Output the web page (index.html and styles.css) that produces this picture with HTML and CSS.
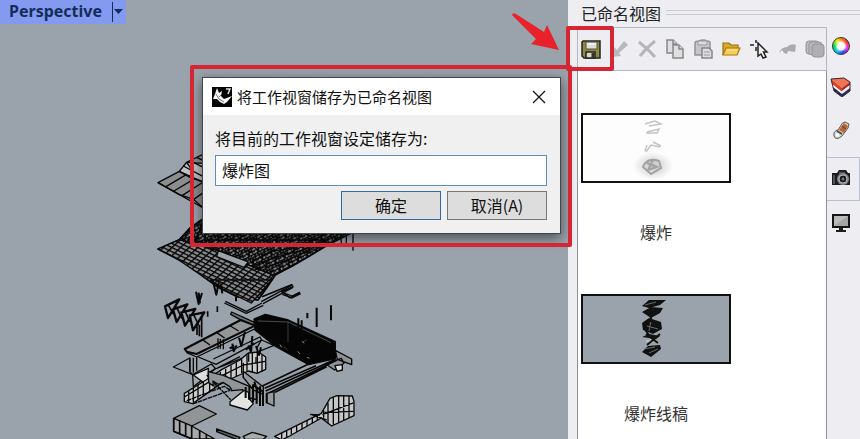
FILE: index.html
```html
<!DOCTYPE html>
<html lang="zh-CN">
<head>
<meta charset="utf-8">
<title>已命名视图</title>
<link rel="stylesheet" href="styles.css">
</head>
<body>
<div class="app">
  <main class="viewport">
    <svg class="model" width="568" height="439" viewBox="0 0 568 439" aria-hidden="true">
      <defs>
        <pattern id="mesh" width="17" height="11" patternUnits="userSpaceOnUse" patternTransform="matrix(1 .48 -.8 .75 0 0)">
          <rect width="17" height="11" fill="#85878a"/><path d="M0 0H17M0 0V11" stroke="#050505" stroke-width="8"/>
        </pattern>
        <pattern id="scribble" width="31" height="27" patternUnits="userSpaceOnUse" patternTransform="rotate(-27)">
          <path d="M0 2H31M0 10H31M0 19H31M4 0L9 27M16 0L12 27M27 0L22 27M0 0L14 13L31 4M6 25L19 15L31 23" stroke="#080808" stroke-width="4" fill="none"/>
        </pattern>
      </defs>
      <g transform="translate(140 140) scale(.33333)" stroke="#080808" stroke-width="4" stroke-linejoin="round">
        <path d="M54 128L118 94L140 67L190 42V204L160 178L117 163Z" fill="#8b8d8f"/>
        <path d="M118 94L150 112L190 126V70L140 67Z" fill="#bfc1c3"/>
        <path d="M54 128L117 163L190 204M78 140L140 103M102 153L164 116M126 167L190 126M118 94L190 126M130 78L190 110M150 62L190 82M170 52L190 62M140 67L160 96M161 178L190 158" fill="none"/>
        <path d="M54 327L118 299L150 264L190 235L640 276L612 290L558 318L510 347L455 379L406 405L380 444L354 480L292 470L235 442L190 410L160 382L112 357Z" fill="#8a8c90" stroke-width="5"/>
        <path d="M54 327L118 299L230 330L325 375L400 405L354 480L292 470L235 442L190 410L112 357Z" fill="url(#mesh)"/>
        <path d="M118 299L150 264L190 240L625 276L558 318L455 379L400 405L325 375L230 330Z" fill="url(#scribble)"/>
        <path d="M235 332L325 366L312 382L230 350Z" fill="#9da3ac"/>
        <path d="M150 265L130 302M185 250L166 312M145 293L240 327M190 300L560 300M210 316L525 320M330 368L390 335L470 322L550 285M335 379L410 351L490 330L568 296M340 391L430 365L520 327M601 280L605 315M619 280V311M639 276V332" fill="none"/>
        <path d="M366 470L455 434L459 440L425 455L450 473L480 458" fill="none" stroke-width="5"/>
      </g>
      <g transform="translate(140 280) scale(.33333)" stroke="#080808" stroke-width="4" fill="none" stroke-linejoin="round">
        <path d="M210 0L250 28L334 69L360 40L395 0Z" fill="url(#mesh)"/>
        <path d="M218 0L229 44L237 4M242 10L247 40M288 50V64M168 35L176 72L186 39M176 38L180 70" stroke-width="6"/>
        <path d="M75 79L84 114L118 58ZM99 88L110 126L142 73ZM124 97L135 137L166 87ZM149 106L159 151L193 97Z" stroke-width="7"/>
        <path d="M84 73L100 102M109 80L126 116M134 91L150 126M160 102L176 135M171 132V165M178 135V169M185 108V172M203 94V110M232 79V96" stroke-width="5"/>
        <path d="M256 64L319 94L366 69M253 69L319 100L370 76M364 65L455 16M369 71L459 22M427 37L456 48L480 36M427 43L456 54L482 41" />
        <path d="M275 96L345 128L338 139L272 103Z" fill="#6f7274"/>
        <path d="M134 207L302 120L345 137L170 222L140 215Z" fill="#94979a" stroke-width="6"/>
        <path d="M186 178L210 195M229 157L254 174M271 138L296 153M140 218L170 231L348 145M150 233V274M160 233V278M170 231V272M234 175V207M241 177V206M250 178V208"/>
        <path d="M100 261L149 234V274L158 284Z"/>
        <path d="M158 284L214 252L226 265L205 285L160 320Z" fill="#a2a5a8"/>
        <path d="M160 285L205 265V318Z" fill="#ddd"/>
        <path d="M175 231L228 253L365 180L360 171L220 237M230 265L410 193M208 276L300 230M365 180L410 200"/>
        <path d="M342 117L376 103L445 120L586 185V236L506 254L408 200L345 150Z" fill="#050505"/>
        <path d="M353 123L445 126L573 188" stroke="#6b6e72" stroke-width="2"/>
        <path d="M444 127V187M431 201L440 206M486 187L500 180" stroke="#555" stroke-width="2"/>
        <path d="M530 83V141M573 76V121M502 99V115M475 115V149M485 121V165" stroke-width="6"/>
        <path d="M586 211L635 237V254L592 238ZM557 252L604 235L612 250L584 270Z" fill="#8e9295"/>
        <path d="M585 257L607 254V270L591 274Z" fill="#ddd"/>
        <path d="M367 318L506 252M374 325L528 257M377 333L586 238M382 341L590 241M405 337L560 260" stroke-width="5"/>
        <path d="M133 365V340L203 297L246 268L300 240L325 219L356 216L377 231V268L351 280L325 273L285 291L238 314L158 371Z" fill="#c9cbcd"/>
        <path d="M146 333V367M160 324V367M174 315V357M190 305V347M209 294V336M225 284V325M241 275V315M257 266V306M273 256V297M289 247V289M305 238V279M321 223V274M337 219V277M352 217V280M366 224V276M133 351L204 308L310 255L376 244"/>
        <path d="M140 362L253 319L275 333M158 372L270 331M200 285L272 359" stroke-dasharray="14 2"/>
        <path d="M205 275L250 286L328 319L350 332V359L318 351L308 329L276 332L269 320L249 307L235 313L219 303L220 318L206 308Z" fill="#929598"/>
        <path d="M310 274L370 321V343L340 330L310 292Z" fill="#97999b"/>
        <path d="M270 365L313 331L326 337V354L340 371L322 390L270 375Z" fill="#e3e3e1"/>
        <path d="M380 340L402 335V378L380 368Z" fill="#97999b"/>
        <path d="M317 321V354M328 318V360M339 316V367M350 330V371M360 319V378M369 332V378M380 340V370M337 314L371 336M343 305L354 340" stroke-width="6"/>
        <path d="M277 191L281 214L290 196M297 173L304 198L315 155M325 196L333 216L337 168M348 198L357 225L363 202M269 205L283 198M317 209L343 190" stroke-width="6"/>
        <path d="M310 248V295M326 220V245M348 231V250M364 180L350 205" />
        <path d="M420 194L425 202M487 184L492 190M473 214L480 222M501 232L508 235" stroke="#888" stroke-width="3"/>
        <path d="M101 415L178 377L229 402L155 438Z" fill="#929598"/>
        <path d="M101 415L155 438L224 477H155L101 454Z" fill="#a6a8aa"/>
        <path d="M101 415V454L157 477M119 423V462M137 431V470M155 438V477M179 451V477M199 463V477" stroke-width="5"/>
        <path d="M230 447L300 472L293 480L230 455Z" fill="#606366"/>
        <path d="M310 469L337 457L380 469L370 478H315Z" fill="#a9acae"/>
        <path d="M404 469L544 400L570 355L591 347L637 348L642 365V407L575 438L544 414L449 468L425 480Z" fill="#c5c7c9"/>
        <path d="M425 459V477M440 453V471M454 444V463M470 437V455M486 429V447M501 421V439M517 413V430M532 406V421M551 391V413M564 369V430M580 352V434M596 347V428M611 347V421M627 348V414M547 404L640 369M514 404L560 420M554 397L640 394M510 403L540 405"/>
      </g>
    </svg>
    <button class="view-title" type="button"><span>Perspective</span><svg width="12" height="22" viewBox="0 0 12 22" aria-hidden="true"><path d="M.5 2V22" stroke="#142d58"/><path d="M2 9H11L6.500 14Z" fill="#142d58"/></svg></button>
  </main>

  <aside class="panel">
    <h2 class="panel-title"><span>已命名视图</span></h2>
    <div class="toolbar">
      <button type="button" aria-label="储存"><svg viewBox="0 0 22 22"><path d="M3 3H20V20H4L2 18V4Z" fill="#8d8b43" stroke="#24231d" stroke-width="1.500"/><path d="M6 4H17V11H6Z" fill="#ddd" stroke="#56543a"/><path d="M6 14H15V20H6Z" fill="#d9d6c4" stroke="#252520" stroke-width="1.500"/><path d="M13 15V20" stroke="#35342e" stroke-width="3"/><path d="M7 6H16" stroke="#fff"/></svg></button>
      <button type="button" aria-label="还原"><svg viewBox="0 0 22 22"><path d="M16 3L20 7L11 15L13 18L3 19L6 9L9 12Z" fill="#b8b9ba"/></svg></button>
      <button type="button" aria-label="删除"><svg viewBox="0 0 22 22"><path d="M3 4Q11 10 19 19M19 3Q10 10 4 18" fill="none" stroke="#b5b6b8" stroke-width="3"/></svg></button>
      <button type="button" aria-label="复制"><svg viewBox="0 0 22 22"><g fill="#dedfe0" stroke="#888" stroke-width="1.500"><path d="M3 2H9L13 6V15H3Z"/><path d="M9 2V6H13"/><path d="M9 7H15L19 11V20H9Z"/><path d="M15 7V11H19"/></g></svg></button>
      <button type="button" aria-label="粘贴"><svg viewBox="0 0 22 22"><path d="M3 5Q3 3 7 3Q11 1 15 3Q19 3 18 6V17H3Z" fill="#c6c7c8" stroke="#929395" stroke-width="1.500"/><path d="M6 3V7H15V3Z" fill="#ddd" stroke="#999"/><path d="M10 10H17L20 13V20H10Z" fill="#dedfe0" stroke="#858689" stroke-width="1.500"/><path d="M12 14H18M12 17H18" stroke="#999"/></svg></button>
      <button type="button" aria-label="打开"><svg viewBox="0 0 22 22"><path d="M3 17V5H9L11 7H18V10" fill="#d8a925" stroke="#987116" stroke-width="1.200"/><path d="M3 17L6 10H20L17 17Z" fill="#f7cf58" stroke="#a37817" stroke-width="1.200"/><path d="M7 12H17" stroke="#ffe99b"/></svg></button>
      <button type="button" aria-label="选取"><svg viewBox="0 0 22 22"><path d="M2 7H6M10 7H12M8 2V5M8 9V13" stroke="#222" stroke-width="1.500"/><path d="M10 5L19 14L15.500 14L18 19L15 20L13 16L10 18Z" fill="#eee" stroke="#222" stroke-width="1.500"/></svg></button>
      <button type="button" aria-label="编辑"><svg viewBox="0 0 22 22"><path d="M3 15Q5 9 11 9Q15 5 20 7L19 14L12 13L11 16L8 15L6 12Z" fill="#a9abad"/></svg></button>
      <button type="button" aria-label="图层"><svg viewBox="0 0 22 22"><g stroke="#929497" fill="#b9bbbd"><rect x="2" y="3" width="13" height="13" rx="3"/><rect x="5" y="4" width="13" height="13" rx="3"/><rect x="8" y="6" width="12" height="13" rx="3" fill="#aeb0b2"/></g></svg></button>
    </div>
    <div class="views">
      <figure>
        <svg viewBox="2 2 146 66" aria-hidden="true"><defs><radialGradient id="haze"><stop stop-color="#bbb"/><stop offset=".4" stop-color="#ddd"/><stop offset="1" stop-color="#fdfdfd"/></radialGradient></defs><rect width="150" height="70" fill="#fdfdfd"/><ellipse cx="72" cy="53" rx="20" ry="14" fill="url(#haze)"/><g fill="none"><path d="M64 11L74 8L80 11L68 13M66 19L78 16L76 20H65M65 39L70 32L79 34M66 32L64 38M72 29L80 33" stroke="#c4c4c4" stroke-width="1.500"/><path d="M62 54Q66 44 78 48L80 55L70 61ZM66 50L76 54L67 57L72 47" stroke="#a2a2a2" stroke-width="2"/></g></svg>
        <figcaption>爆炸</figcaption>
      </figure>
      <figure>
        <svg viewBox="2 2 146 66" aria-hidden="true"><rect width="150" height="70" fill="#9aa2ac"/><path d="M61 12L68 6L85 6L79 11L68 14ZM61 18L70 13L82 14L79 19L70 24ZM61 29L68 24L80 28L81 35L72 40L62 36ZM61 43L68 40L79 42L75 45ZM61 58L67 52L79 51L80 55L70 63Z" fill="#111"/><path d="M64 11L75 8M66 32L77 35M70 27L68 37M63 55L74 53M68 59L77 55" stroke="#666b70"/><path d="M65 47H72L69 45" stroke="#ddd" fill="none"/><path d="M65 40L77 49M79 40L66 51M70 20V28M63 34L70 44" stroke="#111" stroke-width="2"/></svg>
        <figcaption>爆炸线稿</figcaption>
      </figure>
    </div>
    <nav class="tabs" aria-label="面板">
      <button type="button" aria-label="材质"><i class="wheel"></i></button>
      <button type="button" aria-label="图层"><svg viewBox="0 0 22 22"><path d="M1 4L14 3L20 7L12 13Z" fill="#ee7653"/><path d="M1 4L12 13V17L2 9Z" fill="#d94024"/><path d="M2 9L12 17V19L3 12Z" fill="#fff"/><path d="M3 12L12 19V22L4 16Z" fill="#202c63"/><path d="M12 13L20 7V10L12 16Z" fill="#b4251d"/><path d="M12 16L20 10V13L12 19Z" fill="#eee"/><path d="M12 19L20 13V16L12 22Z" fill="#202c63"/><path d="M1 4L14 3L20 7V16L12 22L4 16Z" fill="none" stroke="#41202a"/></svg></button>
      <button type="button" aria-label="渲染"><svg viewBox="0 0 22 22"><path d="M15 3L19 5L18 9L12 17Q6 22 4 17Q3 12 8 11L10 8Q12 3 15 3Z" fill="#dad9d3" stroke="#555"/><path d="M14 4L18 7L14 14L9 11Z" fill="#bd632f"/><path d="M12 7L16 10" stroke="#632f18"/><path d="M7 12L12 15" stroke="#444" stroke-width="2"/><path d="M6 16H9" stroke="#fff" stroke-width="3"/></svg></button>
      <button class="selected" type="button" aria-label="已命名视图"><svg viewBox="0 0 22 22"><path d="M2 6H7L9 3H16L18 6H20V18H2Z" fill="#1c1d20"/><circle cx="13" cy="12" r="6" fill="#85888b"/><circle cx="13" cy="12" r="4" fill="#18191b" stroke="#bbb"/><circle cx="13" cy="12" r="1.500" fill="#777"/><path d="M9 6H15M4 8V17" stroke="#888"/></svg></button>
      <button type="button" aria-label="显示"><svg viewBox="0 0 22 22"><path d="M2 3H20V17H2Z" fill="#161616"/><path d="M4 5H18V15H4Z" fill="#b9bab9"/><path d="M4 15L18 5V15Z" fill="#a4a5a4"/><path d="M9 17H13V19H16V21H6V19H9Z" fill="#1d1d1d"/></svg></button>
    </nav>
  </aside>

  <form class="dialog" role="dialog" aria-labelledby="dialog-title">
    <header>
      <svg class="rhino" width="20" height="20" viewBox="0 0 20 20" aria-hidden="true"><path d="M0 0H20V20H0Z" fill="#050505"/><path d="M5 1L7 6L10 4L9 9L12 12L20 9L15 15L12 17L8 15L5 12L1 12L3 7Z" fill="#f6f6f6"/><path d="M4 7L7 12L12 15M7 10L9 8" fill="none" stroke="#777"/><path d="M14 2H18L16 7" fill="none" stroke="#ddd" stroke-width="1.500"/></svg>
      <h1 id="dialog-title">将工作视窗储存为已命名视图</h1>
      <button class="close" type="button" aria-label="关闭"><svg width="14" height="14" viewBox="0 0 14 14"><path d="M1 1L13 13M13 1L1 13" stroke="#151515" stroke-width="1.300"/></svg></button>
    </header>
    <div class="dialog-body">
      <label for="view-name">将目前的工作视窗设定储存为:</label>
      <input id="view-name" type="text" value="爆炸图">
      <div class="actions"><button class="primary" type="button">确定</button><button type="button">取消(A)</button></div>
    </div>
  </form>
  <div class="mark mark-dialog"></div>
  <div class="mark mark-save"></div>
  <svg class="arrow" width="50" height="42" viewBox="0 0 50 42" aria-hidden="true"><path d="M0 3Q1 0 4 2L32 20L35 13L47 38L19 32L24 27Z" fill="#e8212b"/></svg>
</div>
</body>
</html>
```
FILE: styles.css
```css
* { box-sizing: border-box; }

body {
  margin: 0;
  font: 16px/24px "Noto Sans CJK SC", sans-serif;
  color: #222;
}

button, input { font: inherit; color: inherit; }

button {
  padding: 0;
  border: 0;
  background: none;
}

.app {
  position: relative;
  display: grid;
  grid-template-columns: 1fr 292px;
  height: 100vh;
  overflow: hidden;
}

.viewport {
  position: relative;
  overflow: hidden;
  background: #9aa2ac;
}

.model {
  position: absolute;
  top: 0;
  left: 0;
}

.view-title {
  position: relative;
  display: flex;
  gap: 10px;
  height: 24px;
  padding: 0 2px 0 9px;
  background: #849af0;
  color: #142d58;
  font: bold 16px/22px "Noto Sans", sans-serif;
}

.panel {
  display: grid;
  grid-template: 27px 44px 1fr / 1fr 33px;
  padding-left: 9px;
  background: #ededf2;
  overflow: hidden;
}

.panel-title {
  grid-column: 1 / -1;
  display: flex;
  align-items: center;
  gap: 5px;
  margin: 0;
  padding: 0 0 2px 4px;
  font-size: 16px;
  font-weight: 400;
}

.panel-title::after {
  content: "";
  flex: 1;
  height: 3px;
  border: solid #c9ccd4;
  border-width: 1px 0;
}

.toolbar {
  display: flex;
  align-items: center;
  gap: 6px;
  padding-left: 2px;
  border: 1px solid #b5b8c2;
}

.toolbar button { flex: none; width: 22px; height: 22px; }
.toolbar svg, .tabs svg { display: block; width: 22px; height: 22px; }

.views {
  grid-row: 3;
  padding: 42px 3px 0;
  border: solid #8f929b;
  border-width: 0 1px;
  background: #fff;
  overflow: hidden;
}

.views figure { height: 181px; margin: 0; width: 150px; }
.views svg { display: block; width: 150px; height: 70px; border: 2px solid #111; }
.views figcaption { margin-top: 37px; color: #333; text-align: center; }

.tabs {
  grid-area: 2 / 2 / 4 / 3;
  display: flex;
  flex-direction: column;
}

.tabs button {
  display: flex;
  align-items: center;
  justify-content: center;
  height: 44px;
  padding: 0 5px 3px 0;
}

.tabs button:first-child { height: 38px; padding-bottom: 1px; }
.tabs .selected { margin-top: 4px; border: solid #b9bfd0; border-width: 1px 1px 1px 0; }

.wheel {
  width: 18px;
  height: 18px;
  border: 1px solid #333;
  border-radius: 50%;
  background: radial-gradient(#fff 0 30%, transparent 55%), conic-gradient(#ff8a00, #f33 15%, #e3e 30%, #33e 45%, #0cf 60%, #0d4 75%, #ee0 90%, #ff8a00);
}

.dialog {
  position: absolute;
  top: 77px;
  left: 202px;
  width: 359px;
  border: 1px solid #42454b;
  background: #f0f0f0;
  color: #111;
  box-shadow: 0 4px 12px #0008;
}

.dialog header {
  display: flex;
  align-items: center;
  gap: 5px;
  height: 37px;
  padding: 0 14px 0 9px;
  background: #fff;
}

.dialog h1 { flex: 1; margin: 0; font-size: 15px; font-weight: 400; }
.close { display: flex; }
.dialog-body { padding: 11px 13px 13px 12px; }
.dialog label { display: block; height: 29px; }

.dialog input {
  display: block;
  width: 100%;
  height: 31px;
  padding: 0 6px 1px;
  border: 1px solid #5c8fbd;
  background: #fff;
}

.actions {
  display: flex;
  justify-content: flex-end;
  gap: 6px;
  margin-top: 5px;
}

.actions button {
  width: 100px;
  height: 29px;
  padding-bottom: 2px;
  border: 1px solid #777;
  background: #ddd;
}

.actions .primary { border-color: #34699d; }

.mark {
  position: absolute;
  border: 4px solid #d52733;
  border-radius: 2px;
  pointer-events: none;
}

.mark-dialog { top: 65px; left: 190px; width: 382px; height: 182px; }
.mark-save { top: 26px; left: 566px; width: 48px; height: 45px; }
.arrow { position: absolute; top: 12px; left: 512px; }
```
